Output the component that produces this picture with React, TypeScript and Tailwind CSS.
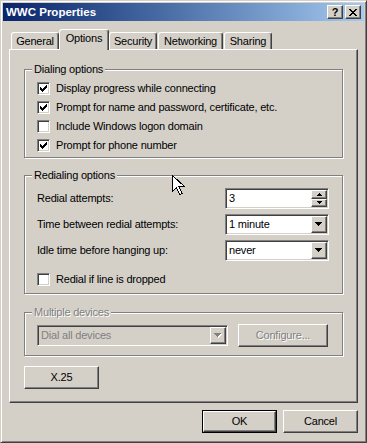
import React from "react";

const raised =
  "border border-t-white border-l-white border-r-[#404040] border-b-[#404040] shadow-[inset_-1px_-1px_0_#808080] bg-[#d4d0c8]";
const sunken =
  "border border-t-[#808080] border-l-[#808080] border-r-white border-b-white shadow-[inset_1px_1px_0_#404040,inset_-1px_-1px_0_#d4d0c8]";

function Check({ checked }: { checked: boolean }) {
  return (
    <div className={`relative w-[13px] h-[13px] shrink-0 bg-white ${sunken}`}>
      {checked && (
        <svg width="7" height="7" className="absolute left-[2px] top-[2px]" shapeRendering="crispEdges">
          <rect x="0" y="2" width="1" height="3" fill="#000" />
          <rect x="1" y="3" width="1" height="3" fill="#000" />
          <rect x="2" y="4" width="1" height="3" fill="#000" />
          <rect x="3" y="3" width="1" height="3" fill="#000" />
          <rect x="4" y="2" width="1" height="3" fill="#000" />
          <rect x="5" y="1" width="1" height="3" fill="#000" />
          <rect x="6" y="0" width="1" height="3" fill="#000" />
        </svg>
      )}
    </div>
  );
}

function DownArrow({ color = "#000", shadow = false }: { color?: string; shadow?: boolean }) {
  return (
    <svg width="8" height="5" shapeRendering="crispEdges">
      {shadow && (
        <g fill="#fff">
          <rect x="1" y="1" width="7" height="1" />
          <rect x="2" y="2" width="5" height="1" />
          <rect x="3" y="3" width="3" height="1" />
          <rect x="4" y="4" width="1" height="1" />
        </g>
      )}
      <g fill={color}>
        <rect x="0" y="0" width="7" height="1" />
        <rect x="1" y="1" width="5" height="1" />
        <rect x="2" y="2" width="3" height="1" />
        <rect x="3" y="3" width="1" height="1" />
      </g>
    </svg>
  );
}

function SmallArrow({ up }: { up?: boolean }) {
  return (
    <svg width="5" height="3" shapeRendering="crispEdges" className={up ? "rotate-180" : ""}>
      <rect x="0" y="0" width="5" height="1" fill="#000" />
      <rect x="1" y="1" width="3" height="1" fill="#000" />
      <rect x="2" y="2" width="1" height="1" fill="#000" />
    </svg>
  );
}

function Combo({ value, className, disabled }: { value: string; className: string; disabled?: boolean }) {
  return (
    <div className={`h-[21px] p-[1px] flex ${sunken} ${disabled ? "bg-[#d4d0c8] text-[#808080]" : "bg-white"} ${className}`}>
      <div className="flex-1 flex items-center pl-[2px]">{value}</div>
      <div className={`w-[16px] flex items-center justify-center ${raised}`}>
        {disabled ? <DownArrow color="#808080" shadow /> : <DownArrow />}
      </div>
    </div>
  );
}

function Spinner({ value }: { value: string }) {
  return (
    <div className={`w-[104px] h-[21px] p-[1px] flex bg-white ${sunken}`}>
      <div className="flex-1 flex items-center pl-[2px]">{value}</div>
      <div className="w-[16px] flex flex-col">
        <div className={`flex-1 flex items-center justify-center ${raised}`}>
          <SmallArrow up />
        </div>
        <div className={`flex-1 flex items-center justify-center ${raised}`}>
          <SmallArrow />
        </div>
      </div>
    </div>
  );
}

function Group({
  label,
  disabled,
  className,
  children,
}: {
  label: string;
  disabled?: boolean;
  className: string;
  children: React.ReactNode;
}) {
  return (
    <div className={`relative w-[319px] border border-[#808080] shadow-[inset_1px_1px_0_#fff,1px_1px_0_#fff] ${className}`}>
      <span
        className={`absolute left-[7px] -top-[8px] px-[2px] bg-[#d4d0c8] leading-[14px] ${
          disabled ? "text-[#808080] [text-shadow:1px_1px_0_#fff]" : ""
        }`}
      >
        {label}
      </span>
      {children}
    </div>
  );
}

function CheckRow({ checked, label }: { checked: boolean; label: string }) {
  return (
    <div className="h-[13px] flex items-center gap-[6px]">
      <Check checked={checked} />
      <span className="leading-[13px]">{label}</span>
    </div>
  );
}

function Tab({ label, active, className }: { label: string; active?: boolean; className: string }) {
  return (
    <div
      className={`flex items-center justify-center border-t border-l border-r border-t-white border-l-white border-r-[#404040] shadow-[inset_-1px_0_0_#808080] rounded-t-[3px] bg-[#d4d0c8] ${
        active ? "h-[21px] -mb-[1px] relative z-10 pb-[3px]" : "h-[17px]"
      } ${className}`}
    >
      {label}
    </div>
  );
}

export default function App() {
  return (
    <div className="relative w-[367px] h-[443px] bg-[#d4d0c8] text-[11px] tracking-[-0.2px] text-black font-['Liberation_Sans',Arial,sans-serif] overflow-hidden select-none">
      <div className="w-full h-full p-[2px] flex flex-col border border-t-[#d4d0c8] border-l-[#d4d0c8] border-r-[#404040] border-b-[#404040] shadow-[inset_1px_1px_0_#fff,inset_-1px_-1px_0_#808080]">
        {/* title bar */}
        <div className="h-[18px] flex items-center pl-[3px] pr-[3px] bg-linear-to-r from-[#0a246a] to-[#a6caf0]">
          <span className="flex-1 text-white font-bold text-[11.5px] tracking-normal leading-[18px]">WWC Properties</span>
          <div className={`w-[16px] h-[14px] flex items-center justify-center font-bold text-[11px] leading-none ${raised}`}>
            ?
          </div>
          <div className={`ml-[2px] w-[16px] h-[14px] flex items-center justify-center ${raised}`}>
            <svg width="8" height="7" shapeRendering="crispEdges">
              <g fill="#000">
                <rect x="0" y="0" width="2" height="1" />
                <rect x="6" y="0" width="2" height="1" />
                <rect x="1" y="1" width="2" height="1" />
                <rect x="5" y="1" width="2" height="1" />
                <rect x="2" y="2" width="4" height="1" />
                <rect x="3" y="3" width="2" height="1" />
                <rect x="2" y="4" width="4" height="1" />
                <rect x="1" y="5" width="2" height="1" />
                <rect x="5" y="5" width="2" height="1" />
                <rect x="0" y="6" width="2" height="1" />
                <rect x="6" y="6" width="2" height="1" />
              </g>
            </svg>
          </div>
        </div>

        {/* tabs */}
        <div className="mt-[8px] ml-[6px] h-[20px] flex items-end">
          <Tab label="General" className="ml-[2px] w-[48px]" />
          <Tab label="Options" active className="w-[50px]" />
          <Tab label="Security" className="w-[48px]" />
          <Tab label="Networking" className="ml-[1px] w-[65px]" />
          <Tab label="Sharing" className="ml-[1px] w-[48px]" />
        </div>

        {/* panel */}
        <div className="ml-[6px] w-[349px] h-[354px] pt-[19px] pl-[14px] flex flex-col border border-t-white border-l-white border-r-[#404040] border-b-[#404040] shadow-[inset_-1px_-1px_0_#808080]">
          <Group label="Dialing options" className="h-[89px] pt-[12px] pl-[12px] flex flex-col gap-[6px]">
            <CheckRow checked label="Display progress while connecting" />
            <CheckRow checked label="Prompt for name and password, certificate, etc." />
            <CheckRow checked={false} label="Include Windows logon domain" />
            <CheckRow checked label="Prompt for phone number" />
          </Group>

          <Group label="Redialing options" className="mt-[17px] h-[119px] pt-[12px] pl-[12px] flex flex-col">
            <div className="h-[21px] flex items-center">
              <span className="w-[188px]">Redial attempts:</span>
              <Spinner value="3" />
            </div>
            <div className="mt-[5px] h-[21px] flex items-center">
              <span className="w-[188px]">Time between redial attempts:</span>
              <Combo value="1 minute" className="w-[104px]" />
            </div>
            <div className="mt-[5px] h-[21px] flex items-center">
              <span className="w-[188px]">Idle time before hanging up:</span>
              <Combo value="never" className="w-[104px]" />
            </div>
            <div className="mt-[12px]">
              <CheckRow checked={false} label="Redial if line is dropped" />
            </div>
          </Group>

          <Group label="Multiple devices" disabled className="mt-[18px] h-[44px] pt-[11px] pl-[12px] flex items-start">
            <Combo value="Dial all devices" disabled className="mt-[1px] w-[191px]" />
            <div
              className={`ml-[10px] w-[90px] h-[23px] flex items-center justify-center text-[#808080] [text-shadow:1px_1px_0_#fff] ${raised}`}
            >
              Configure...
            </div>
          </Group>

          <div className={`mt-[10px] w-[75px] h-[23px] flex items-center justify-center ${raised}`}>X.25</div>
        </div>

        {/* dialog buttons */}
        <div className="mt-[7px] pr-[6px] flex justify-end gap-[6px]">
          <div className="w-[75px] h-[23px] border border-black flex">
            <div className={`flex-1 flex items-center justify-center ${raised}`}>OK</div>
          </div>
          <div className={`w-[75px] h-[23px] flex items-center justify-center ${raised}`}>Cancel</div>
        </div>
      </div>

      {/* mouse pointer */}
      <svg width="13" height="21" className="absolute left-[172px] top-[175px]" shapeRendering="crispEdges">
        <path d="M0.5 0.5 V16.5 L4.5 12.5 L7.5 19.5 L10 18.5 L7 11.5 H12.5 Z" fill="#fff" stroke="#000" strokeWidth="1" />
      </svg>
    </div>
  );
}
